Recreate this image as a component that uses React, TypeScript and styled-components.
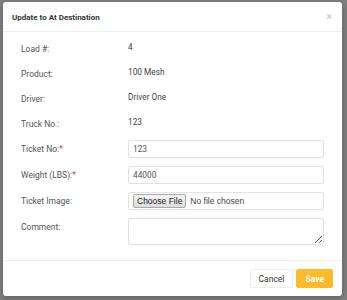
import React from "react";
import styled, { createGlobalStyle } from "styled-components";

const GlobalStyle = createGlobalStyle`
  html, body {
    margin: 0;
    padding: 0;
    background: #7f7f7f;
    font-family: Roboto, "Liberation Sans", Arial, sans-serif;
  }
`;

const Backdrop = styled.div`
  width: 347px;
  height: 300px;
  padding: 2px 5px 4px 3px;
  box-sizing: border-box;
`;

const Modal = styled.div`
  width: 339px;
  height: 294px;
  background: #fff;
  border-radius: 3px;
  display: flex;
  flex-direction: column;
  box-shadow: 0 2px 6px rgba(0, 0, 0, 0.25);
`;

const Header = styled.div`
  flex-shrink: 0;
  height: 29px;
  display: flex;
  align-items: center;
  justify-content: space-between;
  padding: 0 9px 0 9px;
  border-bottom: 1px solid #eceeef;
`;

const Title = styled.h5`
  margin: 0;
  padding-top: 1px;
  font-size: 8px;
  font-weight: 700;
  color: #333;
`;

const Close = styled.span`
  font-size: 11px;
  color: #c4c4c4;
  line-height: 1;
  padding-right: 1px;
`;

const Body = styled.div`
  flex: 1;
  padding: 3px 18px 0 18px;
  display: flex;
  flex-direction: column;
`;

const StaticRow = styled.div`
  display: grid;
  grid-template-columns: 107px 1fr;
  height: 25px;
  align-items: center;
`;

const Label = styled.div<{ $top?: boolean; $shift?: boolean }>`
  font-size: 8.5px;
  color: #555;
  line-height: 18px;
  padding-top: ${(p) => (p.$shift ? "2px" : "0")};
  align-self: ${(p) => (p.$top ? "start" : "center")};
`;

const Value = styled.div`
  font-size: 8.3px;
  color: #444;
  margin-top: -2px;
`;

const Req = styled.span`
  color: #e53935;
`;

const FormRow = styled.div`
  display: grid;
  grid-template-columns: 107px 1fr;
  align-items: center;
`;

const Fields = styled.div`
  margin-top: 5px;
  display: flex;
  flex-direction: column;
  gap: 8px;
`;

const Input = styled.input`
  box-sizing: border-box;
  width: 196px;
  height: 18px;
  border: 1px solid #e2e2e2;
  border-radius: 2px;
  padding: 0 4px;
  font-family: inherit;
  font-size: 8.3px;
  color: #555;
  outline: none;
`;

const FileBox = styled.div`
  box-sizing: border-box;
  width: 196px;
  height: 18px;
  border: 1px solid #e2e2e2;
  border-radius: 2px;
  padding: 0 4px;
  display: flex;
  align-items: center;
  gap: 4px;
`;

const FileButton = styled.span`
  font-family: "Liberation Sans", Arial, sans-serif;
  font-size: 8.5px;
  color: #222;
  background: linear-gradient(#f4f4f4, #dedede);
  border: 1px solid #a9a9a9;
  border-radius: 2px;
  padding: 0 3px;
  line-height: 12px;
`;

const FileText = styled.span`
  font-family: "Liberation Sans", Arial, sans-serif;
  font-size: 8.5px;
  color: #444;
`;

const TextArea = styled.textarea`
  box-sizing: border-box;
  width: 196px;
  height: 27px;
  border: 1px solid #e2e2e2;
  border-radius: 2px;
  resize: vertical;
  outline: none;
  display: block;
`;

const Footer = styled.div`
  flex-shrink: 0;
  box-sizing: border-box;
  height: 36px;
  border-top: 1px solid #eceeef;
  display: flex;
  justify-content: flex-end;
  align-items: flex-start;
  padding: 8px 9px 0 0;
  gap: 3px;
`;

const Button = styled.button<{ $primary?: boolean }>`
  height: 19px;
  padding: 0 8px;
  border-radius: 2px;
  font-family: inherit;
  font-size: 8.5px;
  font-weight: ${(p) => (p.$primary ? 700 : 400)};
  color: ${(p) => (p.$primary ? "#fff" : "#333")};
  background: ${(p) => (p.$primary ? "#fbbb2c" : "#fff")};
  border: 1px solid ${(p) => (p.$primary ? "#fbbb2c" : "#eeeeee")};
  cursor: pointer;
`;

const info = [
  ["Load #:", "4"],
  ["Product:", "100 Mesh"],
  ["Driver:", "Driver One"],
  ["Truck No.:", "123"],
];

export default function App() {
  return (
    <>
      <GlobalStyle />
      <Backdrop>
        <Modal>
          <Header>
            <Title>Update to At Destination</Title>
            <Close>×</Close>
          </Header>
          <Body>
            {info.map(([label, value]) => (
              <StaticRow key={label}>
                <Label $shift>{label}</Label>
                <Value>{value}</Value>
              </StaticRow>
            ))}
            <Fields>
              <FormRow>
                <Label>
                  Ticket No:<Req>*</Req>
                </Label>
                <Input defaultValue="123" />
              </FormRow>
              <FormRow>
                <Label>
                  Weight (LBS):<Req>*</Req>
                </Label>
                <Input defaultValue="44000" />
              </FormRow>
              <FormRow>
                <Label>Ticket Image:</Label>
                <FileBox>
                  <FileButton>Choose File</FileButton>
                  <FileText>No file chosen</FileText>
                </FileBox>
              </FormRow>
              <FormRow>
                <Label $top>Comment:</Label>
                <TextArea />
              </FormRow>
            </Fields>
          </Body>
          <Footer>
            <Button>Cancel</Button>
            <Button $primary>Save</Button>
          </Footer>
        </Modal>
      </Backdrop>
    </>
  );
}
